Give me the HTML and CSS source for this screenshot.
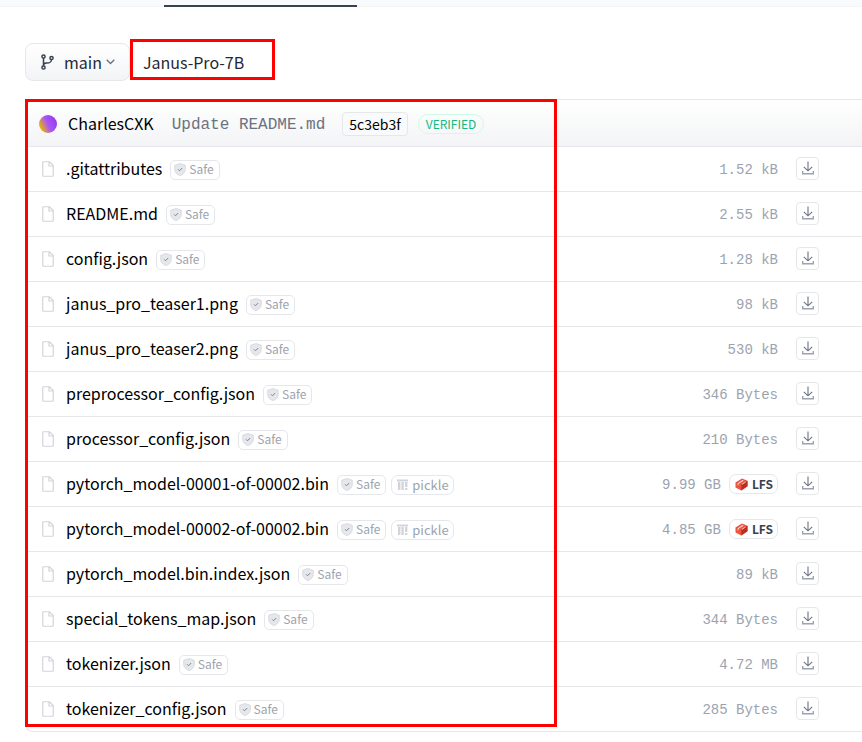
FILE: index.html
```html
<!DOCTYPE html>
<html lang="en">

<head>
    <meta charset="UTF-8">
    <meta name="viewport" content="width=device-width, initial-scale=1.0">
    <title>Janus-Pro-7B - Files</title>
    <link rel="stylesheet" href="styles.css">
</head>

<body>
    <!-- Shared icons -->
    <svg class="sprite" aria-hidden="true">
        <symbol id="icon-file" viewBox="0 0 12 16">
            <path d="M1.5.75h6l3.75 3.75v10a.75.75 0 0 1-.75.75h-9a.75.75 0 0 1-.75-.75v-13A.75.75 0 0 1 1.5.75zM7 1v4h4" fill="none" stroke="currentColor" stroke-width="1.2"/>
        </symbol>
        <symbol id="icon-shield" viewBox="0 0 12 13">
            <path d="M6 .5 11.3 2.3v4c0 3-2.2 5.2-5.3 6.3C2.9 11.5.7 9.3.7 6.3v-4z" fill="#e5e7eb" stroke="#d1d5db" stroke-width=".8"/>
            <path d="m4 6.3 1.5 1.500L8.200 5" fill="none" stroke="#7d8592" stroke-width="1"/>
        </symbol>
        <symbol id="icon-pickle" viewBox="0 0 11 12">
            <path d="M0 .5h11v2H0zM1 3h2.400v8H1zM4.400 3h2.400v8H4.400zM8 3h2.400v5H8zM8 9h2.400v2H8z" fill="#d1d5db"/>
        </symbol>
        <symbol id="icon-lfs" viewBox="0 0 13 13">
            <path d="M.5 4.500 7 .5l5.500 2.300v5.400L6.300 12.500.5 9.500z" fill="#ee5340"/>
            <path d="m6.300 7 6.200-4.200v5.400l-6.200 4.300z" fill="#b8301f"/>
            <path d="m3 5.600 5.200-3.400" fill="none" stroke="#fff" stroke-width="1.100" opacity=".8"/>
            <path d="M3 5.500v1.900M7 6.300l3.500-2.300" fill="none" stroke="#fbd5cf" stroke-width=".9"/>
        </symbol>
        <symbol id="icon-download" viewBox="0 0 12 14">
            <path d="M6 .5v9M1.800 5.800 6 9.800l4.200-4" fill="none" stroke="#6b7280" stroke-width="1.1"/>
            <path d="M.7 10v2.700h10.600V10" fill="none" stroke="#9ca3af" stroke-width="1.4"/>
        </symbol>
    </svg>

    <nav class="tabs" aria-label="Sections">
        <div class="tab-active"></div>
    </nav>

    <main class="content">
        <div class="toolbar">
            <button type="button" class="branch">
                <svg class="branch-icon" viewBox="0 0 13 16" fill="none" stroke="currentColor" stroke-width="1.5">
                    <circle cx="2.5" cy="2.5" r="1.6"/>
                    <circle cx="2.5" cy="13.5" r="1.6"/>
                    <circle cx="10.5" cy="4" r="1.6"/>
                    <path d="M2.5 4v8M10.5 5.600C10.500 9 8 9 5.500 9c-2 0-3 .8-3 2.500"/>
                </svg>
                main
                <svg class="chevron" viewBox="0 0 9 6" fill="none" stroke="currentColor" stroke-width="1.4">
                    <path d="m.7.8 3.800 3.700L8.300.8"/>
                </svg>
            </button>
            <a href="#" class="repo">Janus-Pro-7B</a>
        </div>

        <section class="panel">
            <header class="commit">
                <span class="avatar"></span>
                <a href="#" class="author">CharlesCXK</a>
                <a href="#" class="message">Update README.md</a>
                <a href="#" class="hash">5c3eb3f</a>
                <span class="verified">VERIFIED</span>
            </header>
            <ul class="files">
                <li class="file">
                    <svg class="file-icon"><use href="#icon-file"/></svg>
                    <a href="#" class="name">.gitattributes</a>
                    <span class="badge safe"><svg><use href="#icon-shield"/></svg>Safe</span>
                    <span class="size">1.52 kB</span>
                    <button type="button" class="download" aria-label="Download"><svg><use href="#icon-download"/></svg></button>
                </li>
                <li class="file">
                    <svg class="file-icon"><use href="#icon-file"/></svg>
                    <a href="#" class="name">README.md</a>
                    <span class="badge safe"><svg><use href="#icon-shield"/></svg>Safe</span>
                    <span class="size">2.55 kB</span>
                    <button type="button" class="download" aria-label="Download"><svg><use href="#icon-download"/></svg></button>
                </li>
                <li class="file">
                    <svg class="file-icon"><use href="#icon-file"/></svg>
                    <a href="#" class="name">config.json</a>
                    <span class="badge safe"><svg><use href="#icon-shield"/></svg>Safe</span>
                    <span class="size">1.28 kB</span>
                    <button type="button" class="download" aria-label="Download"><svg><use href="#icon-download"/></svg></button>
                </li>
                <li class="file">
                    <svg class="file-icon"><use href="#icon-file"/></svg>
                    <a href="#" class="name">janus_pro_teaser1.png</a>
                    <span class="badge safe"><svg><use href="#icon-shield"/></svg>Safe</span>
                    <span class="size">98 kB</span>
                    <button type="button" class="download" aria-label="Download"><svg><use href="#icon-download"/></svg></button>
                </li>
                <li class="file">
                    <svg class="file-icon"><use href="#icon-file"/></svg>
                    <a href="#" class="name">janus_pro_teaser2.png</a>
                    <span class="badge safe"><svg><use href="#icon-shield"/></svg>Safe</span>
                    <span class="size">530 kB</span>
                    <button type="button" class="download" aria-label="Download"><svg><use href="#icon-download"/></svg></button>
                </li>
                <li class="file">
                    <svg class="file-icon"><use href="#icon-file"/></svg>
                    <a href="#" class="name">preprocessor_config.json</a>
                    <span class="badge safe"><svg><use href="#icon-shield"/></svg>Safe</span>
                    <span class="size">346 Bytes</span>
                    <button type="button" class="download" aria-label="Download"><svg><use href="#icon-download"/></svg></button>
                </li>
                <li class="file">
                    <svg class="file-icon"><use href="#icon-file"/></svg>
                    <a href="#" class="name">processor_config.json</a>
                    <span class="badge safe"><svg><use href="#icon-shield"/></svg>Safe</span>
                    <span class="size">210 Bytes</span>
                    <button type="button" class="download" aria-label="Download"><svg><use href="#icon-download"/></svg></button>
                </li>
                <li class="file">
                    <svg class="file-icon"><use href="#icon-file"/></svg>
                    <a href="#" class="name">pytorch_model-00001-of-00002.bin</a>
                    <span class="badge safe"><svg><use href="#icon-shield"/></svg>Safe</span>
                    <span class="badge pickle"><svg><use href="#icon-pickle"/></svg>pickle</span>
                    <span class="size">9.99 GB</span>
                    <span class="badge lfs"><svg><use href="#icon-lfs"/></svg>LFS</span>
                    <button type="button" class="download" aria-label="Download"><svg><use href="#icon-download"/></svg></button>
                </li>
                <li class="file">
                    <svg class="file-icon"><use href="#icon-file"/></svg>
                    <a href="#" class="name">pytorch_model-00002-of-00002.bin</a>
                    <span class="badge safe"><svg><use href="#icon-shield"/></svg>Safe</span>
                    <span class="badge pickle"><svg><use href="#icon-pickle"/></svg>pickle</span>
                    <span class="size">4.85 GB</span>
                    <span class="badge lfs"><svg><use href="#icon-lfs"/></svg>LFS</span>
                    <button type="button" class="download" aria-label="Download"><svg><use href="#icon-download"/></svg></button>
                </li>
                <li class="file">
                    <svg class="file-icon"><use href="#icon-file"/></svg>
                    <a href="#" class="name">pytorch_model.bin.index.json</a>
                    <span class="badge safe"><svg><use href="#icon-shield"/></svg>Safe</span>
                    <span class="size">89 kB</span>
                    <button type="button" class="download" aria-label="Download"><svg><use href="#icon-download"/></svg></button>
                </li>
                <li class="file">
                    <svg class="file-icon"><use href="#icon-file"/></svg>
                    <a href="#" class="name">special_tokens_map.json</a>
                    <span class="badge safe"><svg><use href="#icon-shield"/></svg>Safe</span>
                    <span class="size">344 Bytes</span>
                    <button type="button" class="download" aria-label="Download"><svg><use href="#icon-download"/></svg></button>
                </li>
                <li class="file">
                    <svg class="file-icon"><use href="#icon-file"/></svg>
                    <a href="#" class="name">tokenizer.json</a>
                    <span class="badge safe"><svg><use href="#icon-shield"/></svg>Safe</span>
                    <span class="size">4.72 MB</span>
                    <button type="button" class="download" aria-label="Download"><svg><use href="#icon-download"/></svg></button>
                </li>
                <li class="file">
                    <svg class="file-icon"><use href="#icon-file"/></svg>
                    <a href="#" class="name">tokenizer_config.json</a>
                    <span class="badge safe"><svg><use href="#icon-shield"/></svg>Safe</span>
                    <span class="size">285 Bytes</span>
                    <button type="button" class="download" aria-label="Download"><svg><use href="#icon-download"/></svg></button>
                </li>
            </ul>
            <div class="highlight"></div>
        </section>
    </main>
</body>

</html>
```
FILE: styles.css
```css
* {
    margin: 0;
    padding: 0;
    box-sizing: border-box;
}

body {
    font-family: "Noto Sans CJK SC", "Noto Sans", sans-serif;
    font-size: 16px;
    line-height: 24px;
    background-color: #FFFFFF;
    color: #000;
}

a {
    color: inherit;
    text-decoration: none;
}

button {
    font: inherit;
    cursor: pointer;
}

svg {
    flex: none;
}

.sprite {
    display: none;
}

/* Bottom of the tab bar */
.tabs {
    display: flex;
    align-items: flex-end;
    height: 7px;
    padding-left: 164px;
    background-color: #F9FAFB;
    border-bottom: 1px solid #F3F4F6;
}

.tab-active {
    width: 193px;
    height: 2px;
    margin-bottom: -1px;
    background-color: #374151;
}

.content {
    padding: 32px 0 10px 25px;
}

.toolbar {
    display: flex;
    align-items: flex-start;
    height: 42px;
    margin-bottom: 18px;
    color: #1F2937;
}

.branch {
    display: flex;
    align-items: center;
    height: 38px;
    margin-top: 4px;
    padding: 0 14px 0 15px;
    border: 1px solid #E5E7EB;
    border-radius: 8px;
    background: linear-gradient(to bottom, #FFFFFF, #F3F4F6);
    color: #1F2937;
}

.branch-icon {
    width: 13px;
    height: 16px;
    margin-right: 10px;
    color: #374151;
}

.chevron {
    width: 9px;
    height: 6px;
    margin-left: 4px;
    color: #6B7280;
}

.repo {
    width: 145px;
    height: 41px;
    padding: 8px 10px 0;
    border: 3px solid #FF0000;
}

.panel {
    position: relative;
    border: 1px solid #E5E7EB;
    border-right: none;
    border-radius: 8px 0 0 8px;
}

.commit {
    display: flex;
    align-items: center;
    height: 47px;
    padding: 2px 13px 0;
    border-bottom: 1px solid #E5E7EB;
    border-top-left-radius: 8px;
    background: linear-gradient(to bottom, #FFFFFF, #F3F4F6);
    white-space: nowrap;
}

.avatar {
    width: 18px;
    height: 18px;
    margin-right: 11px;
    border-radius: 50%;
    background: linear-gradient(65deg, #EAB308 15%, #A855F7 50%, #9333EA);
}

.author {
    padding-bottom: 2px;
}

.message {
    margin: 0 17px 0 18px;
    padding-top: 2px;
    font-family: "Liberation Mono", monospace;
    color: #6B7280;
}

.hash {
    padding: 0 6px;
    border: 1px solid #E5E7EB;
    border-radius: 4px;
    background-color: #F9FAFB;
    font-size: 14px;
    line-height: 22px;
}

.verified {
    margin-left: 10px;
    padding: 0 7px;
    border: 1px solid #D1FAE5;
    border-radius: 10px;
    color: #10B981;
    font-size: 12px;
    line-height: 18px;
}

.files {
    list-style: none;
}

.file {
    display: flex;
    align-items: center;
    height: 45px;
    padding: 0 43px 0 16px;
    border-bottom: 1px solid #E5E7EB;
    white-space: nowrap;
}

.file:last-child {
    height: 44px;
    border-bottom: none;
}

.file-icon {
    width: 12px;
    height: 16px;
    margin-right: 12px;
    color: #D1D5DB;
}

.name {
    padding-bottom: 2px;
}

.badge {
    display: flex;
    align-items: center;
    height: 20px;
    border: 1px solid #E5E7EB;
    border-radius: 5px;
    color: #9CA3AF;
    font-size: 12px;
    line-height: 18px;
}

.safe {
    margin-top: 2px;
    margin-left: 8px;
    padding: 0 5px 2px 3px;
}

.safe svg {
    width: 12px;
    height: 13px;
    margin-right: 3px;
}

.pickle {
    margin-top: 2px;
    margin-left: 5px;
    padding: 0 4px 0 5px;
    border-radius: 7px;
    font-size: 13px;
}

.pickle svg {
    width: 11px;
    height: 12px;
    margin-right: 4px;
}

.size {
    margin-left: auto;
    padding-top: 2px;
    font-family: "Liberation Mono", monospace;
    font-size: 14px;
    color: #9CA3AF;
}

.lfs {
    margin-left: 8px;
    padding: 0 4px 0 5px;
    border-radius: 7px;
    color: #374151;
    font-weight: 700;
}

.lfs svg {
    width: 13px;
    height: 13px;
    margin-right: 4px;
}

.download {
    display: flex;
    align-items: center;
    justify-content: center;
    width: 23px;
    height: 23px;
    margin-bottom: 2px;
    margin-left: 18px;
    border: 1px solid #E5E7EB;
    border-radius: 4px;
    background-color: #FFFFFF;
}

.download svg {
    width: 12px;
    height: 14px;
}

/* Red frame over the file list */
.highlight {
    position: absolute;
    top: -1px;
    bottom: 4px;
    left: -1px;
    width: 532px;
    border: 3px solid #FF0000;
    pointer-events: none;
}
```
